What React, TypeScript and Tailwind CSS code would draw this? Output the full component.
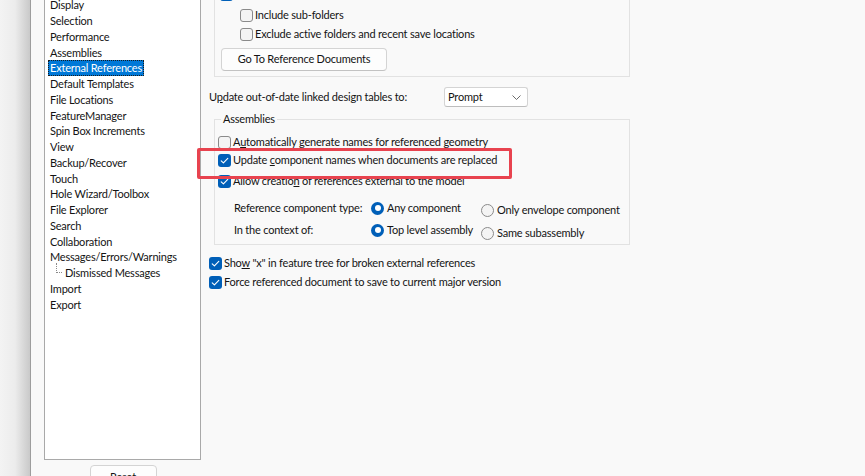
import React from "react";

const tree = [
  "Display",
  "Selection",
  "Performance",
  "Assemblies",
  "External References",
  "Default Templates",
  "File Locations",
  "FeatureManager",
  "Spin Box Increments",
  "View",
  "Backup/Recover",
  "Touch",
  "Hole Wizard/Toolbox",
  "File Explorer",
  "Search",
  "Collaboration",
  "Messages/Errors/Warnings",
  "Dismissed Messages",
  "Import",
  "Export",
];

function Box({ checked }: { checked?: boolean }) {
  if (checked) {
    return (
      <span className="w-[13px] h-[13px] shrink-0 rounded-[3px] bg-[#005fb8] flex items-center justify-center">
        <svg width="13" height="13" viewBox="0 0 13 13">
          <path d="M3.2 6.8 L5.4 8.9 L9.8 4.3" fill="none" stroke="#ffffff" strokeWidth="1.1" strokeLinecap="round" strokeLinejoin="round" />
        </svg>
      </span>
    );
  }
  return <span className="w-[13px] h-[13px] shrink-0 rounded-[3px] border border-[#8a8a8a] bg-[#f4f4f4]" />;
}

function Radio({ checked }: { checked?: boolean }) {
  if (checked) {
    return (
      <span className="w-[13px] h-[13px] shrink-0 rounded-full bg-[#005fb8] flex items-center justify-center">
        <span className="w-[6px] h-[6px] rounded-full bg-white" />
      </span>
    );
  }
  return <span className="w-[13px] h-[13px] shrink-0 rounded-full border border-[#8a8a8a] bg-[#f4f4f4]" />;
}

function CheckRow({ checked, children, className = "" }: { checked?: boolean; children: React.ReactNode; className?: string }) {
  return (
    <div className={"h-[18px] shrink-0 flex items-center gap-[2px] " + className}>
      <Box checked={checked} />
      <span className="whitespace-nowrap pb-[2px]">{children}</span>
    </div>
  );
}

function RadioItem({ checked, children, className = "" }: { checked?: boolean; children: React.ReactNode; className?: string }) {
  return (
    <div className={"flex items-center gap-[3px] whitespace-nowrap " + className}>
      <Radio checked={checked} />
      <span className="pb-[2px]">{children}</span>
    </div>
  );
}

export default function App() {
  return (
    <div className="w-[865px] h-[476px] overflow-hidden flex bg-[#f9f9f9] text-[#141414] text-[11px] tracking-[-0.2px] leading-none font-['Lato',sans-serif]">
      {/* window edge shadow */}
      <div className="w-[31px] h-full shrink-0 bg-gradient-to-r from-[#f3f3f3] via-[#ececec] to-[#c9c9c9] border-r border-[#9d9d9d]" />

      {/* category tree */}
      <div className="ml-[13px] w-[157px] shrink-0 flex flex-col">
        <div className="h-[460px] shrink-0 border border-t-0 border-[#a9a9a9] bg-white overflow-hidden">
          <div className="-mt-[3px] flex flex-col">
            {tree.map((name) => {
              const selected = name === "External References";
              const child = name === "Dismissed Messages";
              return (
                <div key={name} className="h-[15.75px] shrink-0 flex items-center pl-[3px]">
                  {child && (
                    <span className="ml-[8px] mr-[1px] w-[6px] h-[10px] -mt-[9px] border-l border-b border-dotted border-[#8a8a8a]" />
                  )}
                  <span
                    className={
                      "h-full px-[2px] flex items-center whitespace-nowrap " +
                      (selected ? "bg-[#0078d7] text-white outline outline-1 outline-dotted outline-[#1b1b1b] -outline-offset-1" : "")
                    }
                  >
                    {name}
                  </span>
                </div>
              );
            })}
          </div>
        </div>
        <div className="mt-[5px] shrink-0 self-center ml-[1px] w-[67px] h-[22px] rounded-[4px] border border-[#d4d4d4] bg-[#fdfdfd] flex items-center justify-center">
          Reset
        </div>
      </div>

      {/* external references options */}
      <div className="ml-[8px] flex flex-col relative">
        {/* file locations group */}
        <div className="-mt-[20px] ml-[5px] w-[416px] h-[97px] shrink-0 border border-[#e2e2e2] pt-[4px] flex flex-col">
          <CheckRow checked className="pl-[5px]">
            Search file locations for external references and prompt
          </CheckRow>
          <CheckRow className="pl-[25px] mt-[3px]">Include sub-folders</CheckRow>
          <CheckRow className="pl-[25px] mt-[1px]">Exclude active folders and recent save locations</CheckRow>
          <div className="ml-[6px] mt-[5px] w-[166px] h-[23px] pb-[2px] rounded-[4px] border border-[#d4d4d4] border-b-[#c2c2c2] bg-[#fdfdfd] flex items-center justify-center whitespace-nowrap">
            Go To Reference Documents
          </div>
        </div>

        {/* design tables */}
        <div className="mt-[10px] h-[20px] shrink-0 flex items-center">
          <span className="w-[235px] whitespace-nowrap pb-[2px]">
            U<u>p</u>date out-of-date linked design tables to:
          </span>
          <div className="w-[84px] h-[20px] rounded-[3px] border border-[#d4d4d4] border-b-[#bdbdbd] bg-white flex items-center pl-[3px] pr-[6px] justify-between">
            <span className="pb-[2px]">Prompt</span>
            <svg width="9" height="5" viewBox="0 0 9 5">
              <path d="M0.5 0.5 L4.5 4.5 L8.5 0.5" fill="none" stroke="#6b6b6b" strokeWidth="1" />
            </svg>
          </div>
        </div>

        {/* assemblies group */}
        <div className="mt-[12px] ml-[5px] w-[416px] h-[126px] shrink-0 border border-[#e2e2e2] relative pt-[13px] pl-[3px] flex flex-col">
          <span className="absolute -top-[7px] left-[6px] px-[2px] bg-[#f9f9f9]">Assemblies</span>
          <CheckRow>
            A<u>u</u>tomatically generate names for referenced geometry
          </CheckRow>
          <CheckRow checked>
            Update <u>c</u>omponent names when documents are replaced
          </CheckRow>
          <CheckRow checked className="mt-[3px]">
            Allow creatio<u>n</u> of references external to the model
          </CheckRow>
          <div className="mt-[8px] ml-[16px] grid grid-cols-[137px_110px_auto]">
            <div className="h-[20px] pb-[2px] flex items-center whitespace-nowrap">Reference component type:</div>
            <RadioItem checked className="h-[20px]">Any component</RadioItem>
            <RadioItem className="h-[20px] mt-[2px]">Only envelope component</RadioItem>
            <div className="h-[20px] pb-[2px] flex items-center whitespace-nowrap">In the context of:</div>
            <RadioItem checked className="h-[20px]">Top level assembly</RadioItem>
            <RadioItem className="h-[20px] mt-[3px]">Same subassembly</RadioItem>
          </div>
        </div>

        <CheckRow checked className="mt-[9px]">
          Sho<u>w</u> "x" in feature tree for broken external references
        </CheckRow>
        <CheckRow checked className="mt-[1px]">
          Force referenced document to save to current major version
        </CheckRow>

        {/* highlight around the renamed-component option */}
        <div className="absolute left-[-12px] top-[148px] w-[315px] h-[31px] rounded-[2px] border-[3px] border-[#e8434f] pointer-events-none" />
      </div>
    </div>
  );
}
